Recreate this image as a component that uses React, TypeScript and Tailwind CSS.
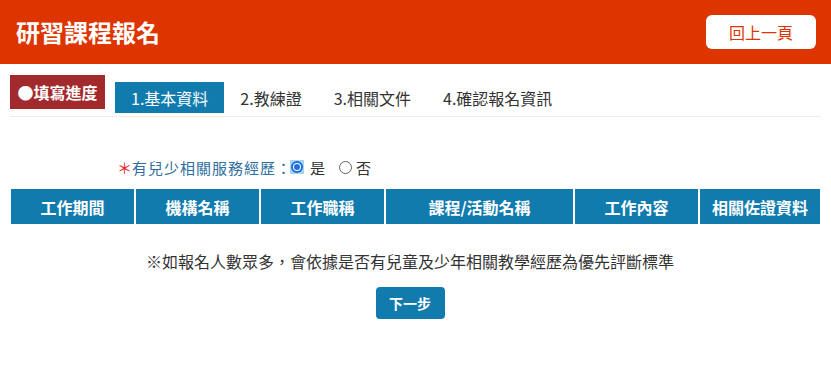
import React from "react";

const cols = ["工作期間", "機構名稱", "工作職稱", "課程/活動名稱", "工作內容", "相關佐證資料"];

export default function App() {
  return (
    <div className="w-[831px] h-[376px] bg-white flex font-['Noto_Sans_CJK_TC','Noto_Sans',sans-serif] text-[#333]">
      <div className="flex-1 flex flex-col">
        <header className="h-[64px] bg-[#dd3400] flex items-center justify-between pl-[16px] pr-[15px]">
          <h1 className="text-white text-[24px] font-bold leading-none">研習課程報名</h1>
          <button className="w-[110px] h-[34px] bg-white rounded-[6px] text-[#dd3400] text-[16px] leading-none flex items-center justify-center">
            回上一頁
          </button>
        </header>

        <div className="mx-[10px] mt-[11px] flex items-start border-b border-[#ebebeb] pb-[3px]">
          <div className="w-[95px] h-[34px] bg-[#a2292c] text-white text-[16px] font-bold flex items-center justify-center leading-none">
            ●填寫進度
          </div>
          <div className="ml-[10px] mt-[7px] flex text-[16px] leading-none">
            <div className="h-[31px] px-4 bg-[#127bae] text-white flex items-center">1.基本資料</div>
            <div className="h-[31px] px-4 flex items-center">2.教練證</div>
            <div className="h-[31px] px-4 flex items-center">3.相關文件</div>
            <div className="h-[31px] px-4 flex items-center">4.確認報名資訊</div>
          </div>
        </div>

        <div className="mt-[39px] ml-[117px] h-[22px] flex items-center text-[15px] leading-none">
          <span className="text-[#e8262a] text-[15px] w-[15px]">＊</span>
          <span className="text-[#2f6e9e] tracking-[1px]">有兒少相關服務經歷：</span>
          <span className="ml-[-2px] w-[14px] h-[14px] bg-[#a9d3f1] flex items-center justify-center">
            <span className="w-[12px] h-[12px] rounded-full bg-[#1f6fe0] flex items-center justify-center">
              <span className="w-[8px] h-[8px] rounded-full bg-white flex items-center justify-center">
                <span className="w-[6px] h-[6px] rounded-full bg-[#1f6fe0]" />
              </span>
            </span>
          </span>
          <span className="ml-[6px]">是</span>
          <span className="ml-[14px] w-[13px] h-[13px] rounded-full border border-[#666]" />
          <span className="ml-[4px]">否</span>
        </div>

        <div className="mt-[11px] mx-[11px] grid grid-cols-[123px_123px_123px_187px_123px_120px] gap-[2px]">
          {cols.map((c) => (
            <div
              key={c}
              className="h-[35px] bg-[#127bae] text-white text-[16px] font-bold flex items-center justify-center leading-none"
            >
              {c}
            </div>
          ))}
        </div>

        <div className="pr-[11px] mt-[25px] text-center text-[16px] leading-[24px] text-[#333]">
          ※如報名人數眾多，會依據是否有兒童及少年相關教學經歷為優先評斷標準
        </div>

        <div className="pr-[11px] mt-[14px] flex justify-center">
          <button className="w-[69px] h-[32px] bg-[#127bae] rounded-[4px] text-white text-[14px] font-bold leading-none">
            下一步
          </button>
        </div>
      </div>
      <div className="w-px bg-[#eef3f7]" />
    </div>
  );
}
